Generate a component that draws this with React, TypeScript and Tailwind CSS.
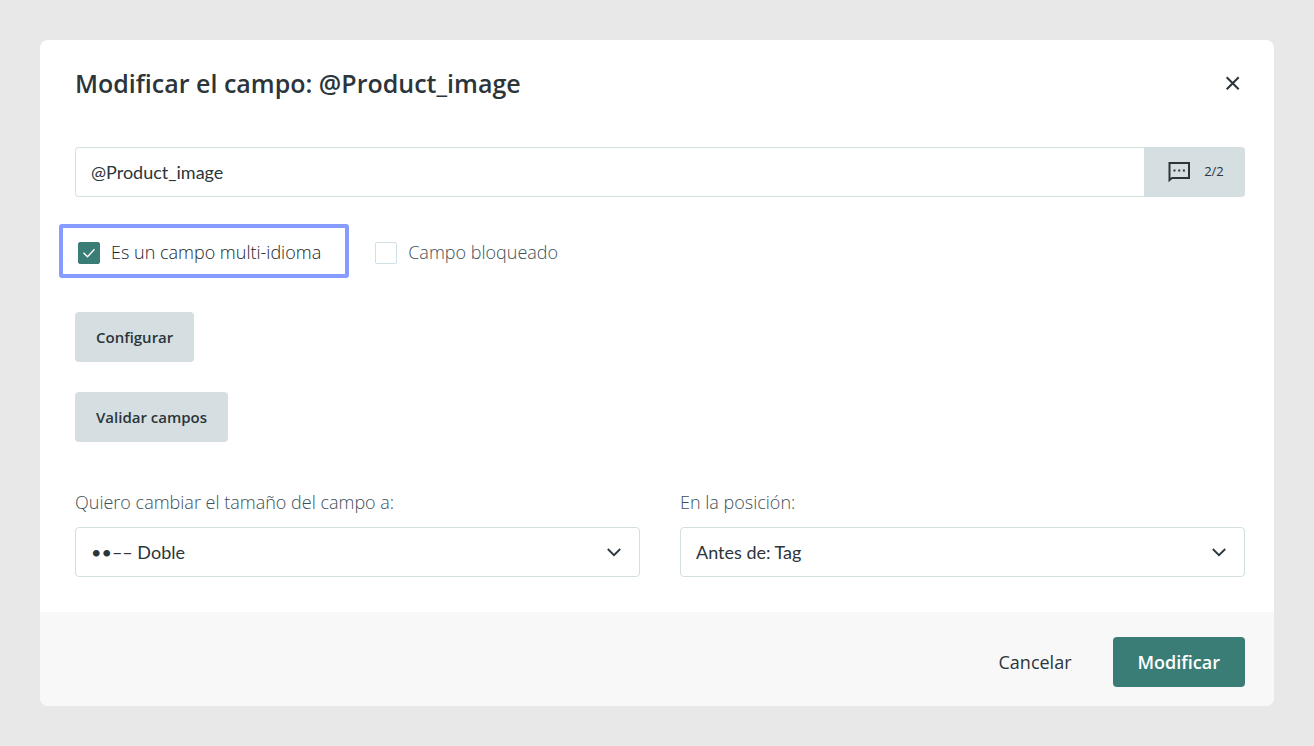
import { useState } from "react";
import type { ReactNode } from "react";

const CloseIcon = () => (
  <svg width="16" height="16" viewBox="0 0 16 16" fill="none" stroke="currentColor" strokeWidth="2">
    <path d="M1.7 2.3l12 12M13.7 2.3l-12 12" />
  </svg>
);

const CommentIcon = () => (
  <svg width="24" height="24" viewBox="0 0 24 24" fill="currentColor">
    <path d="M1.5 2H23v17H5.2l-3.7 3.3V2zm2 2v14L5 17h16V4H3.5z" />
    <path d="M6.5 9.5h2v2h-2zM11.2 9.5h2v2h-2zM15.9 9.5h2v2h-2z" />
  </svg>
);

const Chevron = () => (
  <svg
    className="pointer-events-none absolute right-[18px] top-[17px] text-[#2b353a]"
    width="16"
    height="16"
    viewBox="0 0 16 16"
    fill="none"
    stroke="currentColor"
    strokeWidth="1.8"
  >
    <path d="M1.8 5L8 11.2 14.2 5" />
  </svg>
);

const CheckField = ({
  label,
  defaultChecked = false,
  highlighted = false,
}: {
  label: string;
  defaultChecked?: boolean;
  highlighted?: boolean;
}) => {
  const [checked, setChecked] = useState(defaultChecked);

  return (
    <label
      className={`relative flex items-center gap-[11px] text-lg font-light leading-6 ${
        checked ? "text-[#1c262b]" : "text-[#3c5058]"
      }`}
    >
      {highlighted && (
        <span className="pointer-events-none absolute -bottom-[14px] -left-[19px] -right-7 -top-4 rounded-[3px] border-4 border-[#869dff]" />
      )}
      <span className="relative mt-[2px] h-[22px] w-[22px]">
        <input
          type="checkbox"
          checked={checked}
          onChange={(e) => setChecked(e.target.checked)}
          className="block h-[22px] w-[22px] appearance-none rounded-[2px] border border-[#cfe0e8] bg-white checked:border-[#3a7d77] checked:bg-[#3a7d77]"
        />
        {checked && (
          <svg
            className="pointer-events-none absolute left-0 top-0"
            width="22"
            height="22"
            viewBox="0 0 22 22"
            fill="none"
            stroke="#fff"
            strokeWidth="1.4"
          >
            <path d="M5.5 10.8l4 4 7-7.5" />
          </svg>
        )}
      </span>
      {label}
    </label>
  );
};

const SelectField = ({ id, label, options }: { id: string; label: string; options: string[] }) => (
  <div>
    <label htmlFor={id} className="block text-lg font-light leading-6 text-[#3c5058]">
      {label}
    </label>
    <div className="relative mt-[13px]">
      <select
        id={id}
        className="block h-[50px] w-full appearance-none rounded-[4px] border border-[#d5dfe0] bg-white px-[15px] font-['Lato',sans-serif] text-lg text-[#2b353a]"
      >
        {options.map((option) => (
          <option key={option}>{option}</option>
        ))}
      </select>
      <Chevron />
    </div>
  </div>
);

const SoftButton = ({ children }: { children: ReactNode }) => (
  <button
    type="button"
    className="h-[50px] rounded-[4px] bg-[#d5dee1] px-[21px] text-[15px] font-semibold text-[#2b353a]"
  >
    {children}
  </button>
);

const App = () => {
  return (
    <div className="min-h-screen bg-[#e8e8e8] p-10 font-['Open_Sans',sans-serif] text-[#2b353a]">
      <div role="dialog" aria-labelledby="dialog-title" className="overflow-hidden rounded-lg bg-white">
        <header className="flex items-center justify-between pb-[46px] pl-[35px] pr-[29px] pt-[25px]">
          <h1 id="dialog-title" className="text-[25px] font-semibold leading-9">
            Modificar el campo: @Product_image
          </h1>
          <button type="button" aria-label="Cerrar" className="flex h-6 w-6 items-center justify-center">
            <CloseIcon />
          </button>
        </header>

        <div className="pb-[35px] pl-[35px] pr-[29px]">
          <div className="flex h-[50px]">
            <input
              type="text"
              aria-label="Nombre del campo"
              defaultValue="@Product_image"
              className="min-w-0 flex-1 rounded-l-[4px] border border-r-0 border-[#d5dfe0] px-[15px] font-['Lato',sans-serif] text-lg"
            />
            <button
              type="button"
              className="flex w-[101px] items-center justify-center gap-[13px] rounded-r-[4px] bg-[#d5dee1] pl-[2px] text-[13px]"
            >
              <CommentIcon />
              2/2
            </button>
          </div>

          <div className="mt-[43px] flex items-center gap-[54px] pl-[3px]">
            <CheckField label="Es un campo multi-idioma" defaultChecked highlighted />
            <CheckField label="Campo bloqueado" />
          </div>

          <div className="mt-12 flex flex-col items-start gap-[30px]">
            <SoftButton>Configurar</SoftButton>
            <SoftButton>Validar campos</SoftButton>
          </div>

          <div className="mt-12 grid grid-cols-2 gap-10">
            <SelectField id="size" label="Quiero cambiar el tamaño del campo a:" options={["••–– Doble"]} />
            <SelectField id="position" label="En la posición:" options={["Antes de: Tag"]} />
          </div>
        </div>

        <footer className="flex items-center justify-end gap-[41px] bg-[#f8f8f8] pb-[19px] pr-[29px] pt-[25px] text-lg">
          <button type="button" className="font-medium">
            Cancelar
          </button>
          <button type="button" className="h-[50px] rounded-[4px] bg-[#3a7d77] px-[25px] font-semibold text-white">
            Modificar
          </button>
        </footer>
      </div>
    </div>
  );
};

export default App;
